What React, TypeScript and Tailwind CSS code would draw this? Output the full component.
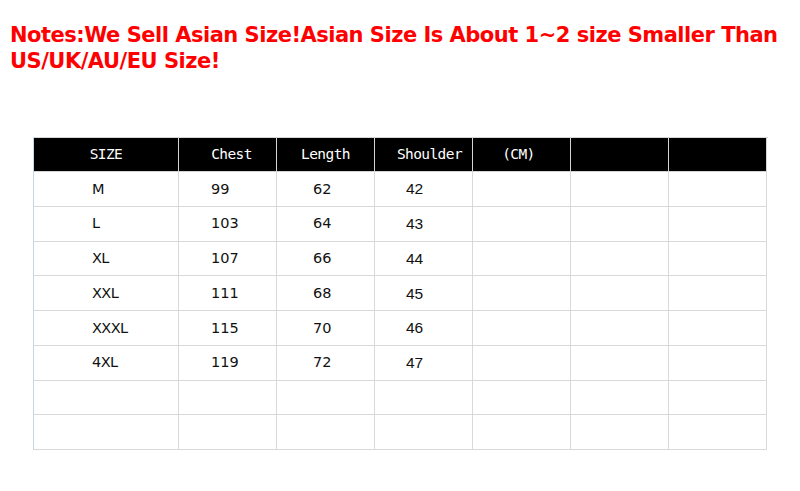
const headers = ['SIZE', 'Chest', 'Length', 'Shoulder', '(CM)', '', ''];

const rows = [
  ['M', '99', '62', '42'],
  ['L', '103', '64', '43'],
  ['XL', '107', '66', '44'],
  ['XXL', '111', '68', '45'],
  ['XXXL', '115', '70', '46'],
  ['4XL', '119', '72', '47'],
  ['', '', '', ''],
  ['', '', '', ''],
];

// per-column nudges so labels sit like the source image
const headerPad = ['pl-0', 'pl-[8px]', 'pl-0', 'pl-[12px]', 'pr-[6px]', '', ''];
const bodyCls = [
  "pl-[58px] pt-[1px] text-[14.5px] font-['DejaVu_Sans',Verdana,sans-serif] tracking-[-0.6px]",
  "pl-[32px] pt-[1px] text-[14.5px] font-['DejaVu_Sans',Verdana,sans-serif]",
  "pl-[36px] pt-[1px] text-[14.5px] font-['DejaVu_Sans',Verdana,sans-serif]",
  "pl-[31px] text-[15.5px] font-['Liberation_Sans',Arial,sans-serif]",
  '',
  '',
  '',
];

export default function App() {
  return (
    <div className="w-[800px] h-[491px] bg-white overflow-hidden">
      <h1 className="pt-[22px] pl-[10px] pr-[4px] text-[21px] leading-[26px] font-bold text-[#ff0000] tracking-[-0.5px] font-['DejaVu_Sans',Verdana,sans-serif]">
        Notes:We Sell Asian Size!Asian Size Is About 1~2 size Smaller Than US/UK/AU/EU Size!
      </h1>

      <div className="ml-[33px] mt-[63px] w-[735px] grid grid-cols-[145px_repeat(6,98px)] border-l border-l-[#c9d3e6] border-t border-t-[#d6d6d6]">
        {headers.map((h, i) => (
          <div
            key={'h' + i}
            className={`h-[34px] bg-black text-white flex items-center justify-center border-r border-r-[#d4d4d4] border-b border-b-[#d4d4d4] text-[14.5px] tracking-[-0.6px] font-['DejaVu_Sans_Mono','Noto_Sans_CJK_SC',monospace] ${headerPad[i]}`}
          >
            {h}
          </div>
        ))}

        {rows.map((r, ri) =>
          [0, 1, 2, 3, 4, 5, 6].map((ci) => (
            <div
              key={ri + '-' + ci}
              className={`h-[34.75px] flex items-center border-r border-r-[#d9d9d9] border-b border-b-[#d9d9d9] text-[#111] ${bodyCls[ci]}`}
            >
              {ci < 4 ? r[ci] : ''}
            </div>
          ))
        )}
      </div>
    </div>
  );
}
